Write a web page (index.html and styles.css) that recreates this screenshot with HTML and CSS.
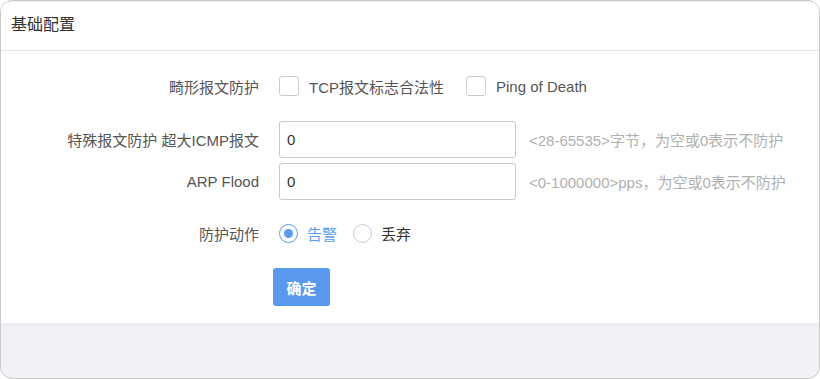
FILE: index.html
```html
<!DOCTYPE html>
<html lang="zh-CN">
<head>
    <meta charset="UTF-8">
    <meta name="viewport" content="width=device-width, initial-scale=1.0">
    <title>基础配置</title>
    <link rel="stylesheet" href="styles.css">
</head>
<body>

<div class="frame">
    <div class="card">
        <div class="card-header">基础配置</div>

        <div class="card-body">
            <!-- 畸形报文 -->
            <div class="form-row row-check">
                <label class="form-label">畸形报文防护</label>
                <div class="form-control">
                    <label class="check"><span class="check-box"></span>TCP报文标志合法性</label>
                    <label class="check"><span class="check-box"></span>Ping of Death</label>
                </div>
            </div>

            <!-- 特殊报文 -->
            <div class="form-row row-input">
                <label class="form-label">特殊报文防护 超大ICMP报文</label>
                <div class="form-control">
                    <input class="text-input" type="text" value="0">
                    <span class="hint">&lt;28-65535&gt;字节，为空或0表示不防护</span>
                </div>
            </div>
            <div class="form-row row-input row-tight">
                <label class="form-label">ARP Flood</label>
                <div class="form-control">
                    <input class="text-input" type="text" value="0">
                    <span class="hint">&lt;0-1000000&gt;pps，为空或0表示不防护</span>
                </div>
            </div>

            <!-- 动作 -->
            <div class="form-row row-radio">
                <label class="form-label">防护动作</label>
                <div class="form-control">
                    <label class="radio checked"><span class="radio-dot"></span>告警</label>
                    <label class="radio"><span class="radio-dot"></span>丢弃</label>
                </div>
            </div>

            <div class="form-row row-btn">
                <span class="form-label"></span>
                <div class="form-control">
                    <button class="btn">确定</button>
                </div>
            </div>
        </div>
    </div>
</div>

</body>
</html>
```

FILE: styles.css
```css
html, body {
    margin: 0;
    padding: 0;
    height: 100%;
    background-color: #fff;
}
body {
    font-family: "Liberation Sans", "Noto Sans CJK SC", sans-serif;
    color: #333;
}
.frame {
    box-sizing: border-box;
    height: 379px;
    border: 1px solid #c8c8c8;
    border-radius: 12px;
    overflow: hidden;
    background-color: #f0f2f5;
    padding-top: 1px;
}
.card {
    background-color: #fff;
    box-shadow: 0 2px 4px rgba(0, 0, 0, 0.04);
}
.card-header {
    height: 48px;
    line-height: 46px;
    padding-left: 10px;
    font-size: 16px;
    color: #333;
    border-bottom: 1px solid #e4e4e4;
}
.card-body {
    padding: 15px 0 17px;
}
.form-row {
    display: flex;
    align-items: center;
}
.form-label {
    width: 258px;
    text-align: right;
    font-size: 15px;
    color: #555;
    flex-shrink: 0;
}
.form-control {
    display: flex;
    align-items: center;
    margin-left: 20px;
}
.row-check {
    height: 40px;
}
.row-input {
    height: 37px;
    margin-top: 15px;
}
.row-tight {
    margin-top: 5px;
}
.row-radio {
    height: 30px;
    margin-top: 18px;
}
.row-btn {
    margin-top: 20px;
}
.check {
    display: flex;
    align-items: center;
    font-size: 15px;
    color: #555;
    margin-right: 22px;
}
.check-box {
    box-sizing: border-box;
    width: 20px;
    height: 20px;
    border: 1px solid #ccc;
    border-radius: 3px;
    margin-right: 10px;
}
.text-input {
    box-sizing: border-box;
    width: 237px;
    height: 37px;
    border: 1px solid #c8c8c8;
    border-radius: 3px;
    padding: 0 7px;
    font-family: inherit;
    font-size: 15px;
    color: #333;
    outline: none;
}
.hint {
    margin-left: 13px;
    font-size: 15px;
    color: #b0b0b0;
}
.radio {
    display: flex;
    align-items: center;
    font-size: 15px;
    color: #333;
    margin-right: 16px;
}
.radio-dot {
    box-sizing: border-box;
    width: 19px;
    height: 19px;
    border: 1px solid #ccc;
    border-radius: 50%;
    margin-right: 9px;
    position: relative;
}
.radio.checked {
    color: #5b9bf0;
}
.radio.checked .radio-dot {
    border-color: #5b9bf0;
}
.radio.checked .radio-dot::after {
    content: "";
    position: absolute;
    left: 4px;
    top: 4px;
    width: 9px;
    height: 9px;
    border-radius: 50%;
    background-color: #5b9bf0;
}
.btn {
    width: 57px;
    height: 38px;
    border: none;
    border-radius: 3px;
    background-color: #5899ef;
    color: #fff;
    font-family: inherit;
    font-size: 15px;
    font-weight: bold;
    cursor: pointer;
    margin-left: -6px;
}
```
